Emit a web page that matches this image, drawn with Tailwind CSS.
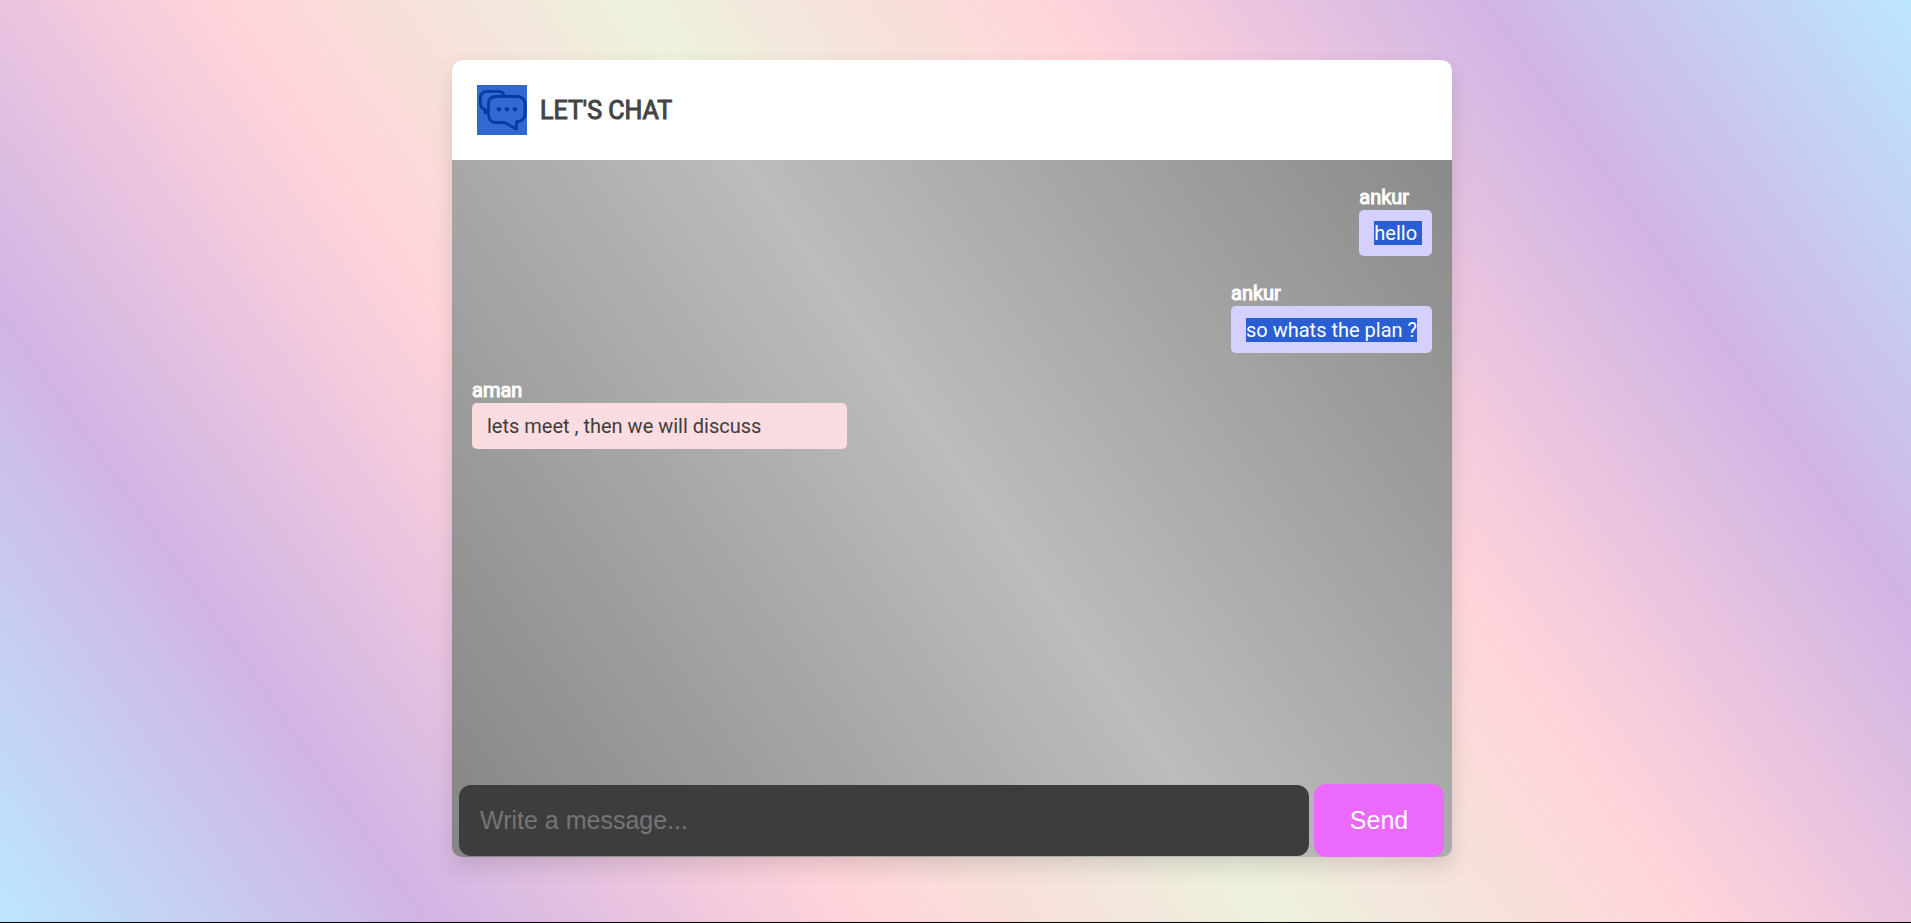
<!DOCTYPE html>
<html lang="en">
<head>
<meta charset="utf-8">
<title>Let's Chat</title>
<script src="https://cdn.jsdelivr.net/npm/@tailwindcss/browser@4"></script>
</head>
<body class="min-h-screen bg-black pb-px flex flex-col font-[Roboto,sans-serif]">
<div class="flex-1 flex flex-col items-center pt-[60px] pb-[65px] pr-[7px] bg-[linear-gradient(55deg,#bce6ff,#d1b4e5,#ffd3da,#edf1dc,#ffd3da,#d1b4e5,#bce6ff)]">
  <main class="flex-1 w-full max-w-[1000px] flex flex-col rounded-[10px] overflow-hidden shadow-[0_10px_20px_rgba(0,0,0,0.12)] bg-[linear-gradient(55deg,#858585,#bcbcbc,#858585)]">
    <header class="flex items-center bg-white p-[25px] gap-[13px]">
      <svg class="size-[50px] bg-[#3367d1]" viewBox="0 0 50 50" fill="none" stroke="#073aa5" stroke-width="2.800" stroke-linejoin="round" stroke-linecap="round" aria-hidden="true">
        <path d="M27 10.500C26.500 7.500 24 6.300 21 6.300H10C6 6.300 3.300 9 3.300 13V18C3.300 21.500 5 23.500 8 24.500V28L10 26"/>
        <path d="M19 11.500H40C45 11.500 48 14.500 48 19V29C48 33 45 36 39.500 37V44L27.500 37.500H19C14 37.500 11.500 34 11.500 29V19C11.500 14.500 14 11.500 19 11.500Z"/>
        <g fill="#073aa5" stroke="none"><circle cx="22" cy="24.300" r="2.200"/><circle cx="30" cy="24.300" r="2.200"/><circle cx="38" cy="24.300" r="2.200"/></g>
      </svg>
      <h1 class="pt-0.5 text-[25px] leading-[30px] font-normal text-[#444] [-webkit-text-stroke:1px_#444]">LET'S CHAT</h1>
    </header>
    <section class="flex-1 flex flex-col gap-6 px-5 pt-6 text-xl leading-[26px]" aria-label="Messages">
      <article class="self-end flex flex-col">
        <h2 class="font-normal text-white [-webkit-text-stroke:1px_white]">ankur</h2>
        <p class="rounded-[5px] bg-[#d4d1ff] py-[11px] pl-[15px] pr-[10px] leading-6 text-white"><span class="block bg-[#2a5fd3] whitespace-pre">hello </span></p>
      </article>
      <article class="self-end flex flex-col">
        <h2 class="font-normal text-white [-webkit-text-stroke:1px_white]">ankur</h2>
        <p class="rounded-[5px] bg-[#d4d1ff] px-[15px] pt-3 pb-[11px] leading-6 text-white"><span class="block bg-[#2a5fd3]">so whats the plan ?</span></p>
      </article>
      <article class="self-start w-[375px] flex flex-col">
        <h2 class="font-normal text-white [-webkit-text-stroke:1px_white]">aman</h2>
        <p class="rounded-[5px] bg-[#fbdce0] px-[15px] py-[11px] leading-6 text-[#3d3d3d]">lets meet , then we will discuss</p>
      </article>
    </section>
    <form class="flex items-center gap-[5px] pl-[7px] pr-2 font-['Liberation_Sans',Arial,sans-serif] text-[25px] leading-[30px]">
      <input type="text" aria-label="Message" placeholder="Write a message..." class="flex-1 min-w-0 h-[71px] rounded-xl bg-[#3d3d3d] px-[21px] text-white placeholder:text-[#757575] outline-none">
      <button type="button" class="w-[130px] h-[73px] rounded-xl bg-[#eb69ff] text-white pb-0.5">Send</button>
    </form>
  </main>
</div>
</body>
</html>
